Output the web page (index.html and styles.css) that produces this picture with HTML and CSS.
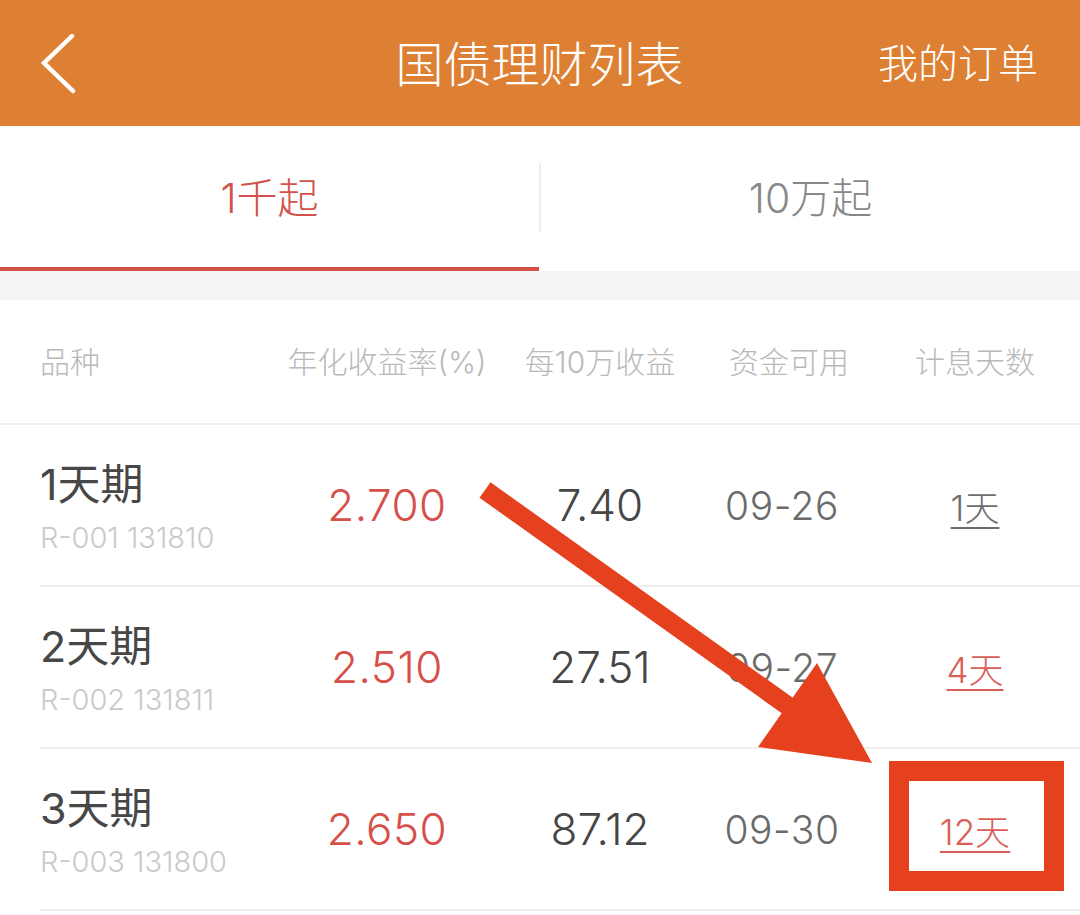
FILE: index.html
```html
<!DOCTYPE html>
<html lang="zh-CN">
<head>
<meta charset="utf-8">
<title>国债理财列表</title>
<link rel="stylesheet" href="styles.css">
</head>
<body>
<div class="page">
  <header class="navbar">
    <div class="nav-left">
      <svg class="back" width="40" height="60" viewBox="0 0 40 60">
        <polyline points="31,2 3,29 32,57" fill="none" stroke="#fff" stroke-width="4.5" stroke-linecap="round" stroke-linejoin="miter"/>
      </svg>
    </div>
    <h1 class="title">国债理财列表</h1>
    <div class="nav-right">我的订单</div>
  </header>

  <nav class="tabs">
    <div class="tab active">1千起</div>
    <div class="tab-divider"></div>
    <div class="tab">10万起</div>
  </nav>

  <div class="band"></div>

  <section class="table">
    <div class="thead">
      <div class="th th-name">品种</div>
      <div class="th">年化收益率(%)</div>
      <div class="th">每10万收益</div>
      <div class="th">资金可用</div>
      <div class="th">计息天数</div>
    </div>

    <div class="row">
      <div class="cell name-cell">
        <div class="name">1天期</div>
        <div class="code">R-001 131810</div>
      </div>
      <div class="cell rate">2.700</div>
      <div class="cell income">7.40</div>
      <div class="cell date">09-26</div>
      <div class="cell days"><span class="link gray">1天</span></div>
    </div>

    <div class="row">
      <div class="cell name-cell">
        <div class="name">2天期</div>
        <div class="code">R-002 131811</div>
      </div>
      <div class="cell rate">2.510</div>
      <div class="cell income">27.51</div>
      <div class="cell date">09-27</div>
      <div class="cell days"><span class="link red">4天</span></div>
    </div>

    <div class="row">
      <div class="cell name-cell">
        <div class="name">3天期</div>
        <div class="code">R-003 131800</div>
      </div>
      <div class="cell rate">2.650</div>
      <div class="cell income">87.12</div>
      <div class="cell date">09-30</div>
      <div class="cell days"><span class="link red">12天</span></div>
    </div>
  </section>

  <svg class="annotation" width="1080" height="915" viewBox="0 0 1080 915">
    <line x1="485" y1="490" x2="795" y2="711" stroke="#E6411F" stroke-width="19"/>
    <polygon points="817,663 758,747 872,763" fill="#E6411F"/>
    <rect x="899" y="771" width="155" height="110" fill="none" stroke="#E6411F" stroke-width="20"/>
  </svg>
</div>
</body>
</html>
```

FILE: styles.css
```css
* { box-sizing: border-box; margin: 0; padding: 0; }

html, body {
  width: 1080px;
  height: 915px;
  overflow: hidden;
  background: #ffffff;
}

body {
  font-family: Inter, "Noto Sans CJK SC", sans-serif;
  font-weight: 300;
}

.page {
  position: relative;
  width: 1080px;
  height: 915px;
  background: #fff;
}

/* nav bar */
.navbar {
  height: 126px;
  background: #DE8033;
  display: grid;
  grid-template-columns: 1fr auto 1fr;
  align-items: center;
  padding: 0 42px 0 41px;
  color: #fff;
}

.nav-left {
  display: flex;
  align-items: center;
}

.back {
  display: block;
  margin-top: 2px;
}

.title {
  font-size: 48px;
  font-weight: 300;
  line-height: 1;
  margin-top: 4px;
}

.nav-right {
  justify-self: end;
  font-size: 40px;
  line-height: 1;
  margin-top: 2px;
}

/* tabs */
.tabs {
  height: 145px;
  display: flex;
  align-items: stretch;
  background: #fff;
}

.tab {
  flex: 1;
  display: flex;
  align-items: center;
  justify-content: center;
  font-size: 41px;
  color: #888888;
  border-bottom: 4px solid transparent;
  padding-bottom: 4px;
}

.tab.active {
  color: #D2524B;
  border-bottom-color: #D2524B;
}

.tab-divider {
  width: 2px;
  margin: 37px 0 39px;
  background: #EDEDED;
}

.band {
  height: 29px;
  background: #F5F4F7;
}

/* table */
.thead {
  height: 125px;
  display: grid;
  grid-template-columns: 242px 210px 216px 162px 210px;
  align-items: center;
  padding-left: 40px;
  border-bottom: 2px solid #EEEEEE;
}

.th {
  font-size: 30px;
  color: #B9B9B9;
  text-align: center;
  white-space: nowrap;
  padding-bottom: 4px;
}

.th-name {
  text-align: left;
}

.row {
  margin-left: 40px;
  height: 162px;
  display: grid;
  grid-template-columns: 242px 210px 216px 162px 210px;
  align-items: center;
  border-bottom: 2px solid #EEEEEE;
}

.cell {
  text-align: center;
  white-space: nowrap;
}

.name-cell {
  text-align: left;
  display: flex;
  flex-direction: column;
  gap: 13px;
  padding-top: 2px;
}

.name {
  font-size: 43px;
  line-height: 50px;
  color: #474747;
  font-weight: 400;
}

.code {
  font-size: 29px;
  line-height: 32px;
  color: #C9C9CC;
}

.rate {
  font-size: 44px;
  color: #D6504A;
  letter-spacing: 0.5px;
}

.income {
  font-size: 44px;
  color: #464646;
  font-weight: 350;
}

.date {
  font-size: 39px;
  color: #6B6B6B;
  letter-spacing: 0.5px;
  padding-right: 14px;
}

.days {
  font-size: 35px;
}

.link {
  text-decoration: underline;
  text-decoration-thickness: 2px;
  text-underline-offset: 6px;
}

.link.gray { color: #6E6E6E; }
.link.red  { color: #D9605A; }

/* overlay annotation drawn on top of the screenshot */
.annotation {
  position: absolute;
  left: 0;
  top: 0;
  pointer-events: none;
}
```
